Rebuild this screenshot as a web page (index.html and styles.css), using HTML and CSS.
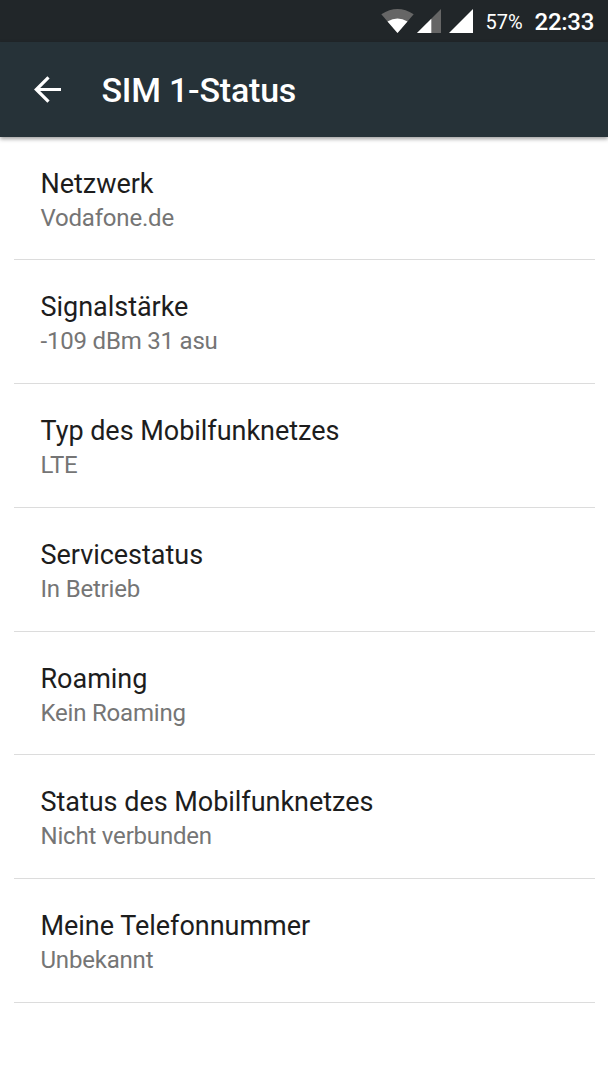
FILE: index.html
```html
<!DOCTYPE html>
<html lang="de">
<head>
<meta charset="utf-8">
<title>SIM 1-Status</title>
<link rel="stylesheet" href="styles.css">
</head>
<body>
<div class="status-bar">
  <svg class="wifi" width="33" height="24" viewBox="0 0 33 24"><path fill="#666" d="M0.300 5.300Q16.500-5.300 32.700 5.300L16.500 24Z"/><path fill="#fff" d="M6.500 12.400Q16.500 6.500 26.500 12.400L16.500 24Z"/></svg>
  <svg class="signal" width="24" height="24" viewBox="0 0 24 24"><path fill="#666" d="M24 0V24H0Z"/><path fill="#fff" d="M14.300 9.700V24H0Z"/></svg>
  <svg class="signal second" width="24" height="24" viewBox="0 0 24 24"><path fill="#fff" d="M24 0V24H0Z"/></svg>
  <span class="battery">57%</span>
  <span class="clock">22:33</span>
</div>
<header class="app-bar">
  <svg class="back" width="28" height="28" viewBox="0 0 28 28"><path fill="none" stroke="#fff" stroke-width="3.200" d="M27 14.500H2.500M14.500 2.300L2.300 14.500L14.500 26.700"/></svg>
  <h1 class="title">SIM 1-Status</h1>
</header>
<main class="list">
  <section class="item"><h2 class="name">Netzwerk</h2><p class="value">Vodafone.de</p></section>
  <section class="item"><h2 class="name">Signalstärke</h2><p class="value">-109 dBm 31 asu</p></section>
  <section class="item"><h2 class="name">Typ des Mobilfunknetzes</h2><p class="value">LTE</p></section>
  <section class="item"><h2 class="name">Servicestatus</h2><p class="value">In Betrieb</p></section>
  <section class="item"><h2 class="name">Roaming</h2><p class="value">Kein Roaming</p></section>
  <section class="item"><h2 class="name">Status des Mobilfunknetzes</h2><p class="value">Nicht verbunden</p></section>
  <section class="item"><h2 class="name">Meine Telefonnummer</h2><p class="value">Unbekannt</p></section>
</main>
</body>
</html>
```
FILE: styles.css
```css
* { box-sizing: border-box; margin: 0; }
body { background: #fff; font-family: Roboto, sans-serif; height: 1080px; overflow: hidden; }
svg { display: block; flex: none; }
.status-bar { height: 42px; background: #212629; color: #fff; display: flex; justify-content: flex-end; align-items: center; padding-right: 14px; }
.signal { margin-left: 3px; }
.signal.second { margin-left: 8px; }
.battery { font-size: 20px; margin-left: 12px; line-height: 42px; padding-top: 2px; }
.clock { font-size: 24px; font-weight: 500; margin-left: 12px; line-height: 42px; padding-top: 2px; letter-spacing: -0.300px; }
.app-bar { height: 94.500px; background: #263238; color: #fff; display: flex; align-items: center; padding-left: 34px; box-shadow: 0 2px 4px rgba(0,0,0,.38); }
.title { font-size: 34px; font-weight: 500; margin-left: 39.500px; line-height: 40px; padding-top: 2px; letter-spacing: -0.220px; }
.list { padding: 0 13.500px; }
.item { height: 123.800px; padding: 30px 27px 0; border-bottom: 1px solid #dcdcdc; }
.name { font-size: 27px; font-weight: 400; line-height: 34px; color: #1d1d1d; letter-spacing: -0.030px; }
.value { font-size: 24px; line-height: 34.500px; color: #757575; letter-spacing: -0.200px; }
```
